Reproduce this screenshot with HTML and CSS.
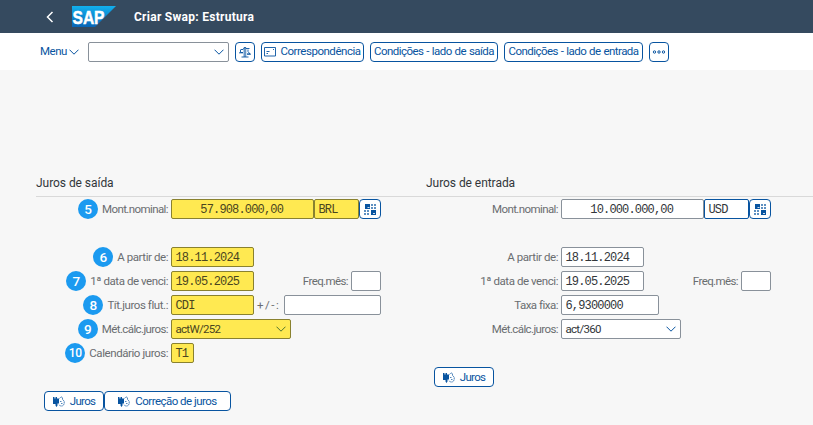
FILE: index.html
```
<!DOCTYPE html>
<html lang="pt-BR">
<head>
<meta charset="utf-8">
<title>Criar Swap: Estrutura</title>
<link rel="stylesheet" href="styles.css">
</head>
<body>
<svg class="defs" width="0" height="0" aria-hidden="true">
  <symbol id="chev" viewBox="0 0 10 6"><path d="M.5.7 5 5.2 9.500.7" fill="none" stroke="currentColor"/></symbol>
  <symbol id="grid" viewBox="0 0 12 11">
    <path d="M1 0h5v5H1zM7 6h5v5H7z" fill="currentColor"/>
    <path d="M3.500 3.500h2M9 9.500h2" stroke="#fff" stroke-width=".8"/>
    <path d="M7 0h2v2H7zM10 0h2v2h-2zM7 3h2v2H7zM10 3h2v2h-2zM0 6h2v2H0zM3 6h2v2H3zM0 9h2v2H0zM3 9h2v2H3z" fill="currentColor" opacity=".65"/>
  </symbol>
  <symbol id="rate" viewBox="0 0 12 11">
    <path d="M0 1h1.500v1.500h1V1H4v1.500h2v5H4.500v2L3.500 11 2.500 9.500V8H0z" fill="currentColor"/>
    <path d="M6.500 2.500 8 .8l1.500.8v2L11.200 5v3L9.500 10H7.300L6 8.500M7 5.500h1.500M8 7.500h1.500" fill="none" stroke="currentColor" stroke-width="1" stroke-dasharray="1.800 .4" opacity=".7"/>
  </symbol>
</svg>
<header class="shell">
  <svg class="back" viewBox="0 0 8 12"><path d="M6.500 1 1.500 6l5 5" fill="none" stroke="#fff" stroke-width="1.500"/></svg>
  <svg class="logo" viewBox="0 0 44 21">
    <defs><linearGradient id="lg" x2="0" y2="1"><stop stop-color="#12b0ee"/><stop offset="1" stop-color="#0864b5"/></linearGradient></defs>
    <path d="M0 0h44L23 21H0z" fill="url(#lg)"/>
    <text class="sap" x="0.500" y="17.500" textLength="32" lengthAdjust="spacingAndGlyphs">SAP</text>
  </svg>
  <h1>Criar Swap: Estrutura</h1>
</header>
<nav class="toolbar">
  <span class="menu"><span class="t-menu">Menu</span><svg class="chev"><use href="#chev"/></svg></span>
  <span class="field command"><svg class="chev"><use href="#chev"/></svg></span>
  <span class="btn square"><svg class="scale" viewBox="0 0 12 12"><path d="M4.500 1.500h2.800V11H4.500z" fill="currentColor" opacity=".6"/><path d="M1.500 3.500H4L6 1l1 1.500h3.500M1.500 4v2.500H4M9 3.500v2l2 2.500H8M2.500 11h7" fill="none" stroke="currentColor" stroke-width=".9"/><path d="M0 6h4v1.500H0zM8 7.500h4V9H8z" fill="currentColor" opacity=".6"/></svg></span>
  <span class="btn mail"><svg class="letter" viewBox="0 0 12 10"><path d="M.5.5h11v8.500H.5zM2.500 4.500h3M2.500 6.500h1.500M9 2.500h1" fill="none" stroke="currentColor" stroke-width=".9"/></svg><span class="t-corr">Correspondência</span></span>
  <span class="btn out"><span class="t-out">Condições - lado de saída</span></span>
  <span class="btn in"><span class="t-in">Condições - lado de entrada</span></span>
  <span class="btn square"><svg class="dots" viewBox="0 0 14 4"><g fill="none" stroke="currentColor"><circle cx="2.500" cy="2" r="1.200"/><circle cx="7" cy="2" r="1.200"/><circle cx="11.500" cy="2" r="1.200"/></g></svg></span>
</nav>
<main>
  <section class="panel outgoing">
    <h2>Juros de saída</h2>
    <div class="row first"><div class="lead"><b>5</b><label class="l-mont">Mont.nominal:</label></div><span class="field amount">57.908.000,00</span><span class="field cur">BRL</span><span class="btn pick"><svg><use href="#grid"/></svg></span></div>
    <div class="row gap"><div class="lead"><b>6</b><label class="l-part">A partir de:</label></div><span class="field date">18.11.2024</span></div>
    <div class="row"><div class="lead"><b>7</b><label class="l-venci">1ª data de venci:</label></div><span class="field date">19.05.2025</span><label class="freq">Freq.mês:</label><span class="field plain tiny"></span></div>
    <div class="row"><div class="lead"><b>8</b><label class="l-tit">Tít.juros flut.:</label></div><span class="field date">CDI</span><label class="spread">+/-:</label><span class="field plain spreadbox"></span></div>
    <div class="row"><div class="lead"><b>9</b><label class="l-met">Mét.cálc.juros:</label></div><span class="field select"><span>actW/252</span><svg class="chev"><use href="#chev"/></svg></span></div>
    <div class="row"><div class="lead"><b class="ten">10</b><label class="l-cal">Calendário juros:</label></div><span class="field cal">T1</span></div>
    <div class="actions"><span class="btn juros"><svg class="rate"><use href="#rate"/></svg><span class="t-juros">Juros</span></span><span class="btn corr"><svg class="rate"><use href="#rate"/></svg><span class="t-cj">Correção de juros</span></span></div>
  </section>
  <section class="panel incoming">
    <h2>Juros de entrada</h2>
    <div class="row first"><div class="lead"><label class="l-mont">Mont.nominal:</label></div><span class="field amount">10.000.000,00</span><span class="field cur">USD</span><span class="btn pick"><svg><use href="#grid"/></svg></span></div>
    <div class="row gap"><div class="lead"><label class="l-part">A partir de:</label></div><span class="field date">18.11.2024</span></div>
    <div class="row"><div class="lead"><label class="l-venci">1ª data de venci:</label></div><span class="field date">19.05.2025</span><label class="freq">Freq.mês:</label><span class="field tiny"></span></div>
    <div class="row"><div class="lead"><label class="l-taxa">Taxa fixa:</label></div><span class="field fixed">6,9300000</span></div>
    <div class="row"><div class="lead"><label class="l-met">Mét.cálc.juros:</label></div><span class="field select"><span>act/360</span><svg class="chev"><use href="#chev"/></svg></span></div>
    <div class="actions"><span class="btn juros"><svg class="rate"><use href="#rate"/></svg><span class="t-juros">Juros</span></span></div>
  </section>
</main>
</body>
</html>
```
FILE: styles.css
```
* { box-sizing: border-box; }
body { margin: 0; height: 425px; overflow: hidden; background: #f7f7f7; font: 11.5px/18px Roboto, sans-serif; color: #32363a; white-space: nowrap; }
svg { flex: none; display: block; }
.defs { position: absolute; }
.shell { height: 33px; background: #354a5f; display: flex; align-items: center; padding-left: 46px; }
.back { width: 8px; height: 12px; }
.logo { width: 44px; height: 21px; margin-left: 18px; }
.sap { font: bold 19px "Liberation Sans", sans-serif; fill: #fff; stroke: #fff; stroke-width: .5px; }
h1 { margin: 0 0 0 18px; font: bold 12px/20px Roboto, sans-serif; color: #fff; letter-spacing: .27px; }
.toolbar { height: 37px; background: #fff; display: flex; align-items: center; padding-left: 40px; color: #0854a0; }
.menu { display: flex; align-items: center; width: 48px; gap: 2px; }
.t-menu { letter-spacing: -.5px; }
.chev { width: 10px; height: 6px; color: #0854a0; }
.field { height: 20px; border: 1px solid #89919a; border-radius: 2px; background: #fff; font: 12px/20px "Liberation Mono", monospace; letter-spacing: -.84px; padding-left: 3.5px; color: #32363a; flex: none; white-space: pre; }
.command { width: 141px; display: flex; align-items: center; justify-content: flex-end; padding-right: 4px; margin-right: 6px; }
.btn { height: 20px; border: 1px solid #0854a0; border-radius: 4px; background: #fff; color: #0854a0; display: flex; align-items: center; justify-content: center; flex: none; }
.square { width: 20px; }
.scale { width: 12px; height: 12px; }
.letter { width: 12px; height: 10px; margin-right: 4px; }
.dots { width: 14px; height: 4px; }
.mail { width: 103px; margin: 0 6px; }
.out { width: 128px; margin-right: 6px; }
.in { width: 139px; margin-right: 6px; }
.t-corr { letter-spacing: -.46px; }
.t-out, .t-in { letter-spacing: -.55px; word-spacing: .6px; }
.t-menu, .t-corr, .t-out, .t-in { padding-bottom: 2px; }
main { display: grid; grid-template-columns: 390px 1fr; padding: 103px 0 0 36px; }
h2 { margin: 0; height: 24px; border-bottom: 1px solid #d9d9d9; font: 12px/20px Roboto, sans-serif; letter-spacing: -.05px; }
.row { display: flex; align-items: center; height: 20px; margin-bottom: 4px; }
.first { margin-top: 2px; }
.gap { margin-top: 28px; }
.lead { width: 132px; margin-right: 3px; display: flex; align-items: center; justify-content: flex-end; gap: 4px; }
label { color: #6a6d70; letter-spacing: -.43px; }
.l-mont { letter-spacing: -.6px; }
.l-met { letter-spacing: -.6px; }
.l-taxa { letter-spacing: -.5px; }
b { width: 20px; height: 20px; border-radius: 50%; background: #1b9af0; color: #fff; font: 500 13.5px/20px Roboto, sans-serif; text-align: center; flex: none; }
.ten { font-size: 12px; letter-spacing: -.3px; }
.amount { width: 143px; padding: 0 30px 0 0; text-align: right; }
.cur { width: 45px; }
.pick { width: 22px; }
.pick svg { width: 12px; height: 11px; }
.date { width: 83px; }
.freq { width: 97px; padding-right: 3px; text-align: right; letter-spacing: -.6px; }
.tiny { width: 30px; }
.spread { width: 30px; padding-left: 3px; letter-spacing: 1.500px; }
.spreadbox { width: 97px; }
.select { width: 120px; display: flex; align-items: center; justify-content: space-between; padding-right: 4px; font: 11.5px/18px Roboto, sans-serif; letter-spacing: -.75px; }
.cal { width: 23px; }
.fixed { width: 98px; }
.select > span { letter-spacing: -.7px; }
.outgoing .field:not(.plain) { background: #ffe951; border-color: #89812f; color: #4a4520; }
.outgoing .field .chev { color: #50742e; }
.incoming .cur { border-color: #0854a0; }
.actions { display: flex; margin: 28px 0 0 8px; }
.rate { width: 12px; height: 11px; margin-right: 5px; }
.juros { width: 60px; }
.corr { width: 127px; }
.t-juros { letter-spacing: -.7px; }
.t-cj { letter-spacing: -.53px; }
```
